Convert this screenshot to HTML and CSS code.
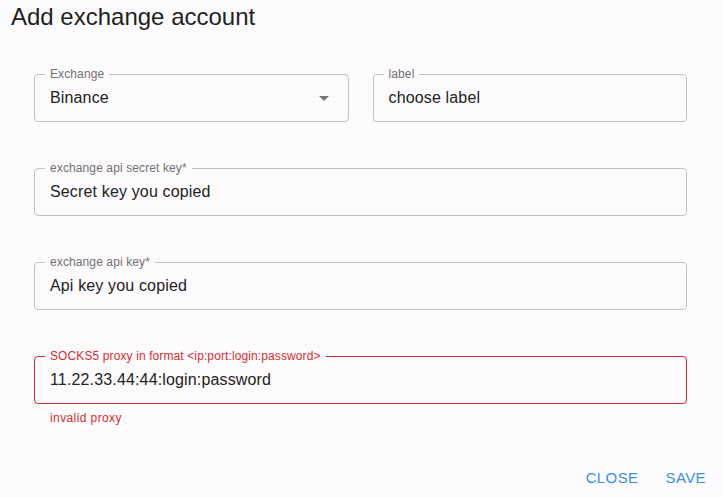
FILE: index.html
```html
<!DOCTYPE html>
<html lang="en">
<head>
<meta charset="utf-8">
<title>Add exchange account</title>
<link rel="stylesheet" href="styles.css">
</head>
<body>
<div class="dialog">
  <h2 class="title">Add exchange account</h2>
  <div class="content">
    <div class="row">
      <fieldset class="field">
        <legend>Exchange</legend>
        <div class="control select">
          <span class="value">Binance</span>
          <svg class="arrow" width="24" height="24" viewBox="0 0 24 24"><path d="M7 10l5 5 5-5z"/></svg>
        </div>
      </fieldset>
      <fieldset class="field">
        <legend>label</legend>
        <div class="control"><span class="value">choose label</span></div>
      </fieldset>
    </div>
    <fieldset class="field">
      <legend>exchange api secret key*</legend>
      <div class="control"><span class="value">Secret key you copied</span></div>
    </fieldset>
    <fieldset class="field">
      <legend>exchange api key*</legend>
      <div class="control"><span class="value">Api key you copied</span></div>
    </fieldset>
    <div class="group">
      <fieldset class="field error">
        <legend>SOCKS5 proxy in format &lt;ip:port:login:password&gt;</legend>
        <div class="control"><span class="value">11.22.33.44:44:login:password</span></div>
      </fieldset>
      <p class="helper">invalid proxy</p>
    </div>
  </div>
  <div class="actions">
    <button class="btn" type="button">Close</button>
    <button class="btn" type="button">Save</button>
  </div>
</div>
</body>
</html>
```
FILE: styles.css
```css
html, body {
  margin: 0;
  padding: 0;
  background: #fdfbfd;
}
body {
  font-family: "Liberation Sans", Arial, sans-serif;
  color: #212121;
  width: 723px;
  height: 497px;
  overflow: hidden;
}
.dialog {
  display: flex;
  flex-direction: column;
}
.title {
  margin: 3px 0 0 11px;
  font-size: 24px;
  font-weight: 400;
  line-height: 28px;
  color: #1f1f1f;
}
.content {
  display: flex;
  flex-direction: column;
  gap: 40px;
  padding: 37px 36px 0 34px;
}
.row {
  display: grid;
  grid-template-columns: 1fr 1fr;
  column-gap: 24px;
}
.field {
  margin: 0;
  min-width: 0;
  border: 1px solid #c2c0c2;
  border-radius: 4px;
  padding: 0 12px 0 15px;
}
.field legend {
  font-size: 12px;
  line-height: 12px;
  letter-spacing: 0.11px;
  color: #717071;
  padding: 0 5px;
  margin-left: -5px;
  white-space: nowrap;
}
.control {
  display: flex;
  align-items: center;
  height: 23px;
  padding: 6px 0 12px;
}
.value {
  flex: 1;
  font-size: 16px;
  line-height: 23px;
  letter-spacing: 0.15px;
  color: #222;
  white-space: nowrap;
}
.arrow {
  fill: #757575;
  flex: none;
}
.field.error {
  border-color: #d32f2f;
}
.field.error legend {
  color: #d32f2f;
}
.group {
  display: flex;
  flex-direction: column;
}
.helper {
  margin: 7px 0 0 16px;
  font-size: 12px;
  line-height: 14px;
  letter-spacing: 0.4px;
  color: #d32f2f;
}
.actions {
  display: flex;
  justify-content: flex-end;
  gap: 11px;
  padding: 38px 9px 0 0;
}
.btn {
  font-family: "Liberation Sans", Arial, sans-serif;
  font-size: 15px;
  line-height: 18px;
  letter-spacing: 0.4px;
  text-transform: uppercase;
  color: #3a8ee6;
  background: none;
  border: 0;
  padding: 6px 8px;
  cursor: pointer;
}
```
